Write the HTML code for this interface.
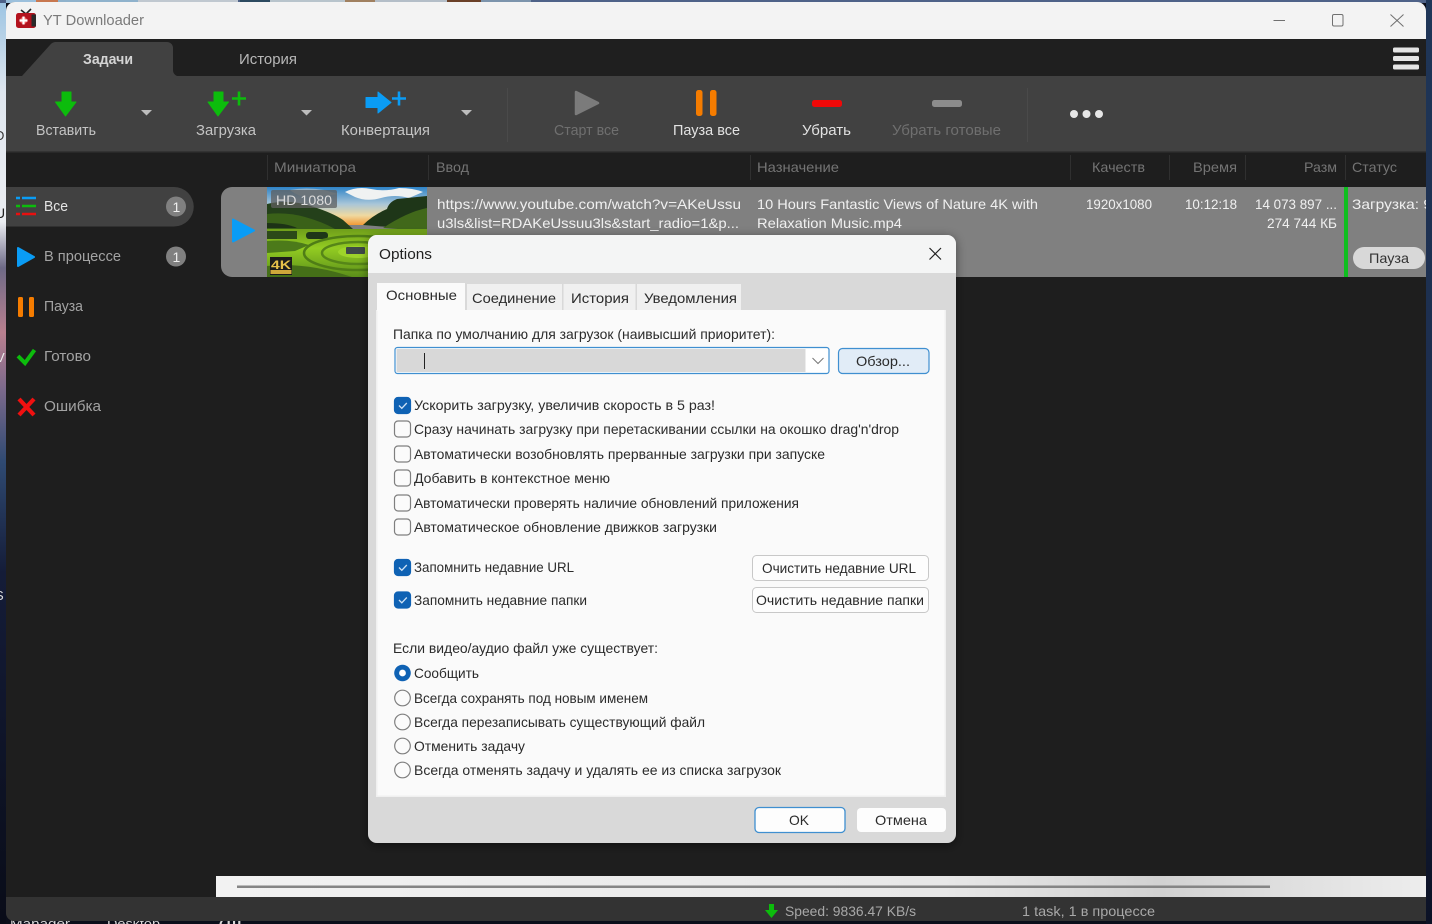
<!DOCTYPE html>
<html lang="ru"><head><meta charset="utf-8"><title>YT Downloader</title>
<style>
html,body{margin:0;padding:0;width:1432px;height:924px;overflow:hidden;background:#111}
svg{display:block;filter:blur(.35px)}
text{font-family:"Liberation Sans","Noto Sans CJK SC",sans-serif;font-size:14px;white-space:pre}
.d text{fill:#2b2b2b}
.tb text{font-size:14.5px}
.hd text{fill:#747474}
.rw text{fill:#f0f0f0}
.sd text{fill:#a3a3a3;font-size:14.5px}
.cb{fill:#fbfbfb;stroke:#7f7f7f;stroke-width:1.2}
.cc{fill:#0f62b4;stroke:#0f62b4;stroke-width:1.2}
</style></head><body>
<svg xmlns="http://www.w3.org/2000/svg" width="1432" height="924" viewBox="0 0 1432 924">
<defs>
<linearGradient id="lft" x1="0" y1="0" x2="0" y2="1"><stop offset="0" stop-color="#9cc4e2"/><stop offset=".1" stop-color="#dfe6ee"/><stop offset=".24" stop-color="#eceef2"/><stop offset=".29" stop-color="#6e6a86"/><stop offset=".36" stop-color="#b9808f"/><stop offset=".42" stop-color="#7d6a8c"/><stop offset=".5" stop-color="#2f4a72"/><stop offset=".62" stop-color="#141c38"/><stop offset="1" stop-color="#090c18"/></linearGradient>
<linearGradient id="rgt" x1="0" y1="0" x2="0" y2="1"><stop offset="0" stop-color="#1f3658"/><stop offset=".5" stop-color="#1c2c4c"/><stop offset="1" stop-color="#0c1226"/></linearGradient>
<linearGradient id="sky" x1="0" y1="0" x2="0" y2="1"><stop offset="0" stop-color="#2f84c8"/><stop offset=".45" stop-color="#a9c6d8"/><stop offset=".75" stop-color="#efd9a0"/><stop offset="1" stop-color="#f29a36"/></linearGradient>
<linearGradient id="grs" x1="0" y1="0" x2="0" y2="1"><stop offset="0" stop-color="#6f9e1a"/><stop offset=".4" stop-color="#93cc22"/><stop offset="1" stop-color="#5b8f1a"/></linearGradient>
<linearGradient id="sb" x1="0" y1="0" x2="1" y2="0"><stop offset="0" stop-color="#f2f2f2"/><stop offset=".6" stop-color="#e8e8e8"/><stop offset=".78" stop-color="#d2d2d2"/><stop offset="1" stop-color="#ededed"/></linearGradient>
<clipPath id="thumb"><rect x="267" y="187" width="160" height="90"/></clipPath>
<clipPath id="stat"><rect x="1349" y="187" width="77" height="60"/></clipPath>
<clipPath id="edge"><rect x="0" y="0" width="6" height="924"/></clipPath>
<filter id="sh" x="-5%" y="-5%" width="110%" height="110%"><feDropShadow dx="0" dy="2" stdDeviation="5" flood-color="#000" flood-opacity=".45"/></filter>
</defs>

<!-- desktop -->
<rect width="1432" height="924" fill="#0b0e1a"/>
<rect x="0" y="0" width="6" height="924" fill="url(#lft)"/>
<rect x="0" y="0" width="1432" height="3" fill="#4e6288"/>
<g><rect x="6" y="0" width="30" height="3" fill="#9cc0dc"/><rect x="36" y="0" width="22" height="3" fill="#c87850"/><rect x="58" y="0" width="80" height="3" fill="#8fb2cc"/><rect x="138" y="0" width="100" height="3" fill="#c0c8d0"/><rect x="240" y="0" width="30" height="3" fill="#2c4a60"/><rect x="270" y="0" width="75" height="3" fill="#b8c4cc"/><rect x="345" y="0" width="30" height="3" fill="#a08060"/><rect x="375" y="0" width="72" height="3" fill="#b4bec8"/><rect x="447" y="0" width="34" height="3" fill="#6a4028"/><rect x="481" y="0" width="50" height="3" fill="#7c94ac"/></g>
<rect x="1426" y="0" width="6" height="924" fill="url(#rgt)"/>
<g clip-path="url(#edge)"><text x="-5" y="140" style="fill:#333;font-size:13px">D</text><text x="-5" y="218" style="fill:#222;font-size:14px">U</text><text x="-4" y="362" style="fill:#eee;font-size:13px">V</text><text x="-5" y="600" style="fill:#ddd;font-size:13px">S</text></g>
<g><text x="10" y="928" textLength="60" lengthAdjust="spacingAndGlyphs" style="fill:#d8d8d8;font-size:13px">Manager</text><text x="107" y="928" textLength="53" lengthAdjust="spacingAndGlyphs" style="fill:#d8d8d8;font-size:13px">Desktop</text><text x="218" y="928" textLength="24" lengthAdjust="spacingAndGlyphs" style="fill:#d8d8d8;font-size:13px">(ill</text></g>

<!-- window -->
<path d="M6 11a9 9 0 0 1 9-9H1417a9 9 0 0 1 9 9V921H14a8 8 0 0 1-8-8Z" fill="#1e1e1e"/>
<path d="M6 39V11a9 9 0 0 1 9-9H1417a9 9 0 0 1 9 9V39Z" fill="#f3f3f3"/>
<!-- title icon -->
<path d="M21 10l5 4 5-5" fill="none" stroke="#222" stroke-width="1.600"/>
<rect x="16" y="13" width="20" height="15" rx="2.500" fill="#b3121d"/>
<rect x="31.500" y="14.500" width="4.500" height="12" fill="#2a2a2a"/>
<circle cx="23.500" cy="20.500" r="3.600" fill="#ef5a5a"/><path d="M23.500 16.500v8M19.500 20.500h8" stroke="#fff" stroke-width="2.200"/>
<text x="43" y="25" textLength="101" lengthAdjust="spacingAndGlyphs" style="fill:#7a7a7a;font-size:15px">YT Downloader</text>
<!-- window controls -->
<path d="M1273.500 20.500H1285" stroke="#707070" stroke-width="1"/>
<rect x="1332.500" y="14.500" width="10.500" height="11.500" rx="1.500" fill="none" stroke="#707070"/>
<path d="M1390.500 14.500L1403.500 26.500M1403.500 14.500L1390.500 26.500" stroke="#707070" stroke-width="1"/>

<!-- tabs bar -->
<rect x="6" y="39" width="1420" height="37" fill="#1f1f1f"/>
<path d="M22 76L50 45a8 8 0 0 1 5-3H167a6 6 0 0 1 6 6V70a6 6 0 0 0 4 6Z" fill="#414141"/>
<text x="83" y="64" textLength="50" lengthAdjust="spacingAndGlyphs" style="fill:#d4d4d4;font-weight:bold;font-size:14.500px">Задачи</text>
<text x="239" y="64" textLength="58" lengthAdjust="spacingAndGlyphs" style="fill:#b8b8b8;font-size:14.500px">История</text>
<rect x="1393" y="47.500" width="26" height="5" rx="1.500" fill="#e4e4e4"/><rect x="1393" y="56" width="26" height="5" rx="1.500" fill="#e4e4e4"/><rect x="1393" y="64.500" width="26" height="5" rx="1.500" fill="#e4e4e4"/>

<!-- toolbar -->
<rect x="6" y="76" width="1420" height="75" fill="#414141"/>
<rect x="6" y="151" width="1420" height="1.500" fill="#333"/>
<path d="M62 92h9v10h5l-10.500 14L55.500 102H62Z" fill="#0cbc0c" stroke="#0cbc0c" stroke-width="1" stroke-linejoin="round"/>
<path d="M214 92h9v10h5.500l-10.500 14L208 102h6Z" fill="#0cbc0c" stroke="#0cbc0c" stroke-width="1" stroke-linejoin="round"/>
<path d="M239 91.500v14M232 98.500h14" stroke="#0cbc0c" stroke-width="2.600"/>
<path d="M366 97.500h12v-5.500l13 10.500-13 10.500v-5.500h-12Z" fill="#0a9cf5" stroke="#0a9cf5" stroke-width="1" stroke-linejoin="round"/>
<path d="M399 91.500v14M392 98.500h14" stroke="#0a9cf5" stroke-width="2.600"/>
<path d="M141 110h11l-5.500 5.500ZM301 110h11l-5.500 5.500ZM461 110h11l-5.500 5.500Z" fill="#bdbdbd"/>
<path d="M507.500 88V142M1027.500 88V142" stroke="#4a4a4a"/>
<path d="M576 92v22l22-11Z" fill="#7b7b7b" stroke="#7b7b7b" stroke-width="2.500" stroke-linejoin="round"/>
<rect x="696" y="90" width="6.500" height="26" rx="2.500" fill="#f57c00"/><rect x="710" y="90" width="6.500" height="26" rx="2.500" fill="#f57c00"/>
<rect x="812" y="100" width="30" height="7" rx="2.500" fill="#f00808"/>
<rect x="932" y="100" width="30" height="7" rx="2.500" fill="#8c8c8c"/>
<circle cx="1074" cy="114" r="4" fill="#e6e6e6"/><circle cx="1086.500" cy="114" r="4" fill="#e6e6e6"/><circle cx="1099" cy="114" r="4" fill="#e6e6e6"/>
<g class="tb">
<text x="36" y="135" textLength="60" lengthAdjust="spacingAndGlyphs" fill="#c4c4c4">Вставить</text>
<text x="196" y="135" textLength="60" lengthAdjust="spacingAndGlyphs" fill="#c4c4c4">Загрузка</text>
<text x="341" y="135" textLength="89" lengthAdjust="spacingAndGlyphs" fill="#c4c4c4">Конвертация</text>
<text x="554" y="135" textLength="65" lengthAdjust="spacingAndGlyphs" fill="#6f6f6f">Старт все</text>
<text x="673" y="135" textLength="67" lengthAdjust="spacingAndGlyphs" fill="#e2e2e2">Пауза все</text>
<text x="802" y="135" textLength="49" lengthAdjust="spacingAndGlyphs" fill="#e2e2e2">Убрать</text>
<text x="892" y="135" textLength="109" lengthAdjust="spacingAndGlyphs" fill="#6f6f6f">Убрать готовые</text>
</g>

<!-- header -->
<path d="M267.500 155V180M428.500 155V180M750.500 155V180M1070.500 155V180M1169.500 155V180M1245.500 155V180M1345.500 155V180" stroke="#303030"/>
<g class="hd">
<text x="274" y="172" textLength="82" lengthAdjust="spacingAndGlyphs">Миниатюра</text>
<text x="436" y="172" textLength="33" lengthAdjust="spacingAndGlyphs">Ввод</text>
<text x="757" y="172" textLength="82" lengthAdjust="spacingAndGlyphs">Назначение</text>
<text x="1092" y="172" textLength="53" lengthAdjust="spacingAndGlyphs">Качеств</text>
<text x="1193" y="172" textLength="44" lengthAdjust="spacingAndGlyphs">Время</text>
<text x="1304" y="172" textLength="33" lengthAdjust="spacingAndGlyphs">Разм</text>
<text x="1352" y="172" textLength="45" lengthAdjust="spacingAndGlyphs">Статус</text>
</g>

<!-- sidebar -->
<path d="M6 187H174a19.500 19.500 0 0 1 0 39.500H6Z" fill="#414141"/>
<path d="M16 198h4M22 198h14" stroke="#0a9cf5" stroke-width="2.500"/>
<path d="M16 206h4M22 206h14" stroke="#0cbc0c" stroke-width="2.500"/>
<path d="M16 214h4M22 214h14" stroke="#e81010" stroke-width="2.500"/>
<path d="M18 248v18l16-9Z" fill="#0a9cf5" stroke="#0a9cf5" stroke-width="2" stroke-linejoin="round"/>
<rect x="18" y="297" width="5" height="20" rx="1.500" fill="#f57c00"/><rect x="29" y="297" width="5" height="20" rx="1.500" fill="#f57c00"/>
<path d="M18 356l7 7L34.500 350" fill="none" stroke="#0cbc0c" stroke-width="4"/>
<path d="M19 399L34 415M34 399L19 415" stroke="#f01010" stroke-width="4.200"/>
<circle cx="176" cy="206.500" r="10" fill="#808080"/><circle cx="176" cy="256.500" r="10" fill="#808080"/>
<text x="172.500" y="212" style="fill:#eee;font-size:14px">1</text><text x="172.500" y="262" style="fill:#eee;font-size:14px">1</text>
<g class="sd">
<text x="44" y="211" textLength="24" lengthAdjust="spacingAndGlyphs" style="fill:#e4e4e4">Все</text>
<text x="44" y="261" textLength="77" lengthAdjust="spacingAndGlyphs">В процессе</text>
<text x="44" y="311" textLength="39" lengthAdjust="spacingAndGlyphs">Пауза</text>
<text x="44" y="361" textLength="47" lengthAdjust="spacingAndGlyphs">Готово</text>
<text x="44" y="411" textLength="57" lengthAdjust="spacingAndGlyphs">Ошибка</text>
</g>

<!-- row -->
<path d="M232 187H1426V277H232a11 11 0 0 1-11-11V198a11 11 0 0 1 11-11Z" fill="#808080"/>
<path d="M233 219.500v22l21-11Z" fill="#0a9cf5" stroke="#0a9cf5" stroke-width="2" stroke-linejoin="round"/>
<g clip-path="url(#thumb)">
<rect x="267" y="187" width="160" height="38" fill="url(#sky)"/>
<path d="M345 192q12-6 26-3t28-1q14 0 24 4l-14 6q-14-4-28 0t-26-1Z" fill="#f0f2f2"/>
<path d="M290 190q16-3 34 0l14 4-26 4q-14-1-22-8Z" fill="#8fb2cc"/>
<!-- left hills -->
<path d="M267 204q22-5 44 2t32 14l10 9H267Z" fill="#24401a"/>
<path d="M267 214q20-2 38 3t30 12H267Z" fill="#3a6118"/>
<path d="M267 223q20 0 30 5H267Z" fill="#1d3216"/>
<!-- right cliff -->
<path d="M427 196l-30 3q-8 3-10 10-14 6-24 16l64 5Z" fill="#1e3618"/>
<path d="M427 208q-20 4-44 20l44 3Z" fill="#41681a"/>
<!-- meadow -->
<rect x="267" y="229" width="160" height="48" fill="url(#grs)"/>
<rect x="306" y="232" width="22" height="7" rx="3" fill="#1e3618"/>
<rect x="267" y="231" width="30" height="8" fill="#2c4a18"/>
<path d="M267 241q24-2 42 4l-14 6-28 2Z" fill="#4c7a1a"/>
<ellipse cx="358" cy="253" rx="54" ry="17" fill="none" stroke="#4f7d16" stroke-width="2.500"/>
<ellipse cx="358" cy="253" rx="36" ry="11" fill="none" stroke="#568618" stroke-width="2.500"/>
<ellipse cx="358" cy="252" rx="20" ry="6" fill="#9ed42a"/>
<rect x="346" y="247" width="19" height="7" rx="1" fill="#3f4a48"/>
<path d="M267 266q40-4 85 11H267Z" fill="#456f18"/>
<rect x="271" y="190" width="66" height="18" rx="2" fill="#5f5f5f" fill-opacity=".75"/>
<text x="276" y="205" textLength="56" lengthAdjust="spacingAndGlyphs" style="fill:#dcdcdc;font-size:14px">HD 1080</text>
<rect x="270" y="257" width="22" height="18" fill="#1c1c1c"/>
<rect x="270.500" y="270" width="21" height="4" fill="#cfa83a"/>
<text x="271" y="269" textLength="20" lengthAdjust="spacingAndGlyphs" style="fill:#e6c04a;font-size:12px;font-weight:bold">4K</text>
</g>
<g class="rw">
<text x="437" y="209" textLength="304" lengthAdjust="spacingAndGlyphs">https://www.youtube.com/watch?v=AKeUssu</text>
<text x="437" y="228" textLength="302" lengthAdjust="spacingAndGlyphs">u3ls&amp;list=RDAKeUssuu3ls&amp;start_radio=1&amp;p...</text>
<text x="757" y="209" textLength="281" lengthAdjust="spacingAndGlyphs">10 Hours Fantastic Views of Nature 4K with</text>
<text x="757" y="228" textLength="145" lengthAdjust="spacingAndGlyphs">Relaxation Music.mp4</text>
<text x="1086" y="209" textLength="66" lengthAdjust="spacingAndGlyphs">1920x1080</text>
<text x="1185" y="209" textLength="52" lengthAdjust="spacingAndGlyphs">10:12:18</text>
<text x="1255" y="209" textLength="82" lengthAdjust="spacingAndGlyphs">14 073 897 ...</text>
<text x="1267" y="228" textLength="70" lengthAdjust="spacingAndGlyphs">274 744 КБ</text>
<g clip-path="url(#stat)"><text x="1352" y="209" textLength="80" lengthAdjust="spacingAndGlyphs">Загрузка: 9</text></g>
</g>
<rect x="1344" y="187" width="4" height="90" fill="#0fbf1f"/>
<rect x="1353" y="247" width="72" height="22" rx="11" fill="#d8d8d8"/>
<text x="1369" y="263" textLength="40" lengthAdjust="spacingAndGlyphs" style="fill:#333">Пауза</text>

<!-- scroll + status -->
<rect x="216" y="876" width="1210" height="21" fill="url(#sb)"/>
<rect x="237" y="885.500" width="1033" height="2.500" fill="#858585"/>
<path d="M6 897H1426V921H14a8 8 0 0 1-8-8Z" fill="#333"/>
<path d="M769 904h5v6h4l-6.500 8-6.500-8h4Z" fill="#0cbc0c"/>
<text x="785" y="916" textLength="131" lengthAdjust="spacingAndGlyphs" style="fill:#a8a8a8">Speed: 9836.47 KB/s</text>
<text x="1022" y="916" textLength="133" lengthAdjust="spacingAndGlyphs" style="fill:#a8a8a8">1 task, 1 в процессе</text>

<!-- dialog -->
<rect x="368" y="235" width="588" height="608" rx="9" fill="#d9d9d9" filter="url(#sh)"/>
<path d="M368 273V244a9 9 0 0 1 9-9H947a9 9 0 0 1 9 9V273Z" fill="#f4f5f5"/>
<text x="379" y="259" textLength="53" lengthAdjust="spacingAndGlyphs" style="fill:#222;font-size:15px">Options</text>
<path d="M929.500 248L941 259.500M941 248L929.500 259.500" stroke="#222" stroke-width="1.200"/>
<rect x="376" y="310" width="570" height="487" fill="#f0f0f0"/>
<rect x="377.500" y="310" width="567" height="485.500" fill="#fafafa"/>
<rect x="467" y="284" width="95" height="26" fill="#f0f0f0"/>
<rect x="563.500" y="284" width="72" height="26" fill="#f0f0f0"/>
<rect x="637" y="284" width="104" height="26" fill="#f0f0f0"/>
<rect x="377" y="283" width="88" height="28" fill="#fafafa"/>
<g class="d">
<text x="386" y="300" textLength="71" lengthAdjust="spacingAndGlyphs">Основные</text>
<text x="472" y="303" textLength="84" lengthAdjust="spacingAndGlyphs">Соединение</text>
<text x="571" y="303" textLength="58" lengthAdjust="spacingAndGlyphs">История</text>
<text x="644" y="303" textLength="93" lengthAdjust="spacingAndGlyphs">Уведомления</text>
<text x="393" y="339" textLength="382" lengthAdjust="spacingAndGlyphs">Папка по умолчанию для загрузок (наивысший приоритет):</text>

<rect x="395" y="347.500" width="434" height="26" rx="2.500" fill="#fff" stroke="#3f8fd0" stroke-width="1.200"/>
<rect x="396.500" y="349" width="409" height="23" fill="#d8d8d8"/>
<path d="M424.500 353V369" stroke="#222" stroke-width="1"/>
<path d="M812.500 358l5.500 5.500 5.500-5.500" fill="none" stroke="#777" stroke-width="1"/>
<rect x="838.500" y="348.500" width="90.500" height="25" rx="4" fill="#e1ecf7" stroke="#3f8fd0" stroke-width="1.200"/>
<text x="856" y="366" textLength="54" lengthAdjust="spacingAndGlyphs">Обзор...</text>

<rect class="cc" x="394.500" y="397.500" width="16" height="16" rx="3.500"/><path d="M399 405.500l2.800 2.800 5-5.300" fill="none" stroke="#cfe2f5" stroke-width="1.300"/>
<rect class="cb" x="394.500" y="421" width="16" height="16" rx="3.500"/>
<rect class="cb" x="394.500" y="446" width="16" height="16" rx="3.500"/>
<rect class="cb" x="394.500" y="470" width="16" height="16" rx="3.500"/>
<rect class="cb" x="394.500" y="495" width="16" height="16" rx="3.500"/>
<rect class="cb" x="394.500" y="519" width="16" height="16" rx="3.500"/>
<text x="414" y="410" textLength="301" lengthAdjust="spacingAndGlyphs">Ускорить загрузку, увеличив скорость в 5 раз!</text>
<text x="414" y="434" textLength="485" lengthAdjust="spacingAndGlyphs">Сразу начинать загрузку при перетаскивании ссылки на окошко drag'n'drop</text>
<text x="414" y="459" textLength="411" lengthAdjust="spacingAndGlyphs">Автоматически возобновлять прерванные загрузки при запуске</text>
<text x="414" y="483" textLength="196" lengthAdjust="spacingAndGlyphs">Добавить в контекстное меню</text>
<text x="414" y="508" textLength="385" lengthAdjust="spacingAndGlyphs">Автоматически проверять наличие обновлений приложения</text>
<text x="414" y="532" textLength="303" lengthAdjust="spacingAndGlyphs">Автоматическое обновление движков загрузки</text>

<rect class="cc" x="394.500" y="559.500" width="16" height="16" rx="3.500"/><path d="M399 567.500l2.800 2.800 5-5.300" fill="none" stroke="#cfe2f5" stroke-width="1.300"/>
<rect class="cc" x="394.500" y="592" width="16" height="16" rx="3.500"/><path d="M399 600l2.800 2.800 5-5.300" fill="none" stroke="#cfe2f5" stroke-width="1.300"/>
<text x="414" y="572" textLength="160" lengthAdjust="spacingAndGlyphs">Запомнить недавние URL</text>
<text x="414" y="605" textLength="173" lengthAdjust="spacingAndGlyphs">Запомнить недавние папки</text>
<rect x="752.500" y="555.500" width="176" height="25" rx="4" fill="#fdfdfd" stroke="#c8c8c8"/>
<rect x="752.500" y="587.500" width="176" height="25" rx="4" fill="#fdfdfd" stroke="#c8c8c8"/>
<text x="762" y="573" textLength="154" lengthAdjust="spacingAndGlyphs">Очистить недавние URL</text>
<text x="756" y="605" textLength="168" lengthAdjust="spacingAndGlyphs">Очистить недавние папки</text>

<text x="393" y="653" textLength="265" lengthAdjust="spacingAndGlyphs">Если видео/аудио файл уже существует:</text>
<circle cx="402.500" cy="673" r="8.300" fill="#0f62b4"/><circle cx="402.500" cy="673" r="3.400" fill="#fff"/>
<circle class="cb" cx="402.500" cy="698" r="7.800"/>
<circle class="cb" cx="402.500" cy="722" r="7.800"/>
<circle class="cb" cx="402.500" cy="746" r="7.800"/>
<circle class="cb" cx="402.500" cy="770" r="7.800"/>
<text x="414" y="678" textLength="65" lengthAdjust="spacingAndGlyphs">Сообщить</text>
<text x="414" y="703" textLength="234" lengthAdjust="spacingAndGlyphs">Всегда сохранять под новым именем</text>
<text x="414" y="727" textLength="291" lengthAdjust="spacingAndGlyphs">Всегда перезаписывать существующий файл</text>
<text x="414" y="751" textLength="111" lengthAdjust="spacingAndGlyphs">Отменить задачу</text>
<text x="414" y="775" textLength="367" lengthAdjust="spacingAndGlyphs">Всегда отменять задачу и удалять ее из списка загрузок</text>

<rect x="755" y="807.500" width="90" height="25" rx="4" fill="#fdfdfd" stroke="#3f8fd0" stroke-width="1.300"/>
<rect x="857" y="808" width="89" height="24" rx="4" fill="#fdfdfd"/>
<text x="789" y="825" textLength="20" lengthAdjust="spacingAndGlyphs">OK</text>
<text x="875" y="825" textLength="52" lengthAdjust="spacingAndGlyphs">Отмена</text>
</g>
</svg>
</body></html>
